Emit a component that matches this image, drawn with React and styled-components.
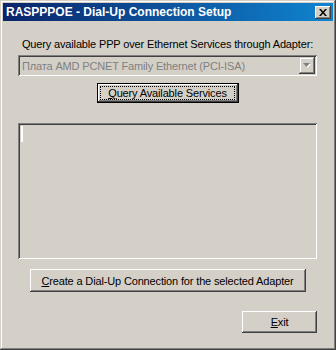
import React from 'react';
import styled, { createGlobalStyle } from 'styled-components';

const GlobalStyle = createGlobalStyle`
  html, body {
    margin: 0;
    padding: 0;
    background: #d4d0c8;
  }
  body {
    font-family: "Liberation Sans", Arial, sans-serif;
    font-size: 11px;
    letter-spacing: -0.15px;
    color: #000;
  }
`;

const Window = styled.div`
  width: 336px;
  height: 350px;
  box-sizing: border-box;
  padding: 3px;

  display: flex;
  flex-direction: column;

  background: #d4d0c8;
  box-shadow: inset -1px -1px #404040, inset 1px 1px #d4d0c8,
    inset -2px -2px #808080, inset 2px 2px #ffffff;
`;

const TitleBar = styled.div`
  height: 18px;
  padding: 0 2px 0 3px;

  display: flex;
  align-items: center;
  justify-content: space-between;

  background: linear-gradient(to right, #0a246a, #1084d0);
`;

const TitleText = styled.span`
  font-size: 12px;
  font-weight: bold;
  letter-spacing: 0;
  color: #ffffff;
  white-space: nowrap;
`;

const CaptionButton = styled.div`
  width: 16px;
  height: 13px;
  box-sizing: border-box;

  display: flex;
  align-items: center;
  justify-content: center;

  background: #d4d0c8;
  box-shadow: inset -1px -1px #404040, inset 1px 1px #ffffff,
    inset -2px -2px #808080;
`;

const Client = styled.div`
  flex: 1;
  padding: 0 16px 0 15px;

  display: flex;
  flex-direction: column;
`;

const Label = styled.div`
  margin-top: 17px;
  line-height: 13px;
  text-align: center;
  white-space: nowrap;
`;

const Sunken = styled.div`
  box-sizing: border-box;
  padding: 2px;
  background: #d4d0c8;
  box-shadow: inset 1px 1px #808080, inset -1px -1px #ffffff,
    inset 2px 2px #404040, inset -2px -2px #d4d0c8;
`;

const Combo = styled(Sunken)`
  height: 21px;
  margin-top: 4px;

  display: flex;
  align-items: stretch;
`;

const ComboText = styled.div`
  flex: 1;
  padding-left: 2px;

  display: flex;
  align-items: center;

  color: #808080;
  white-space: nowrap;
  overflow: hidden;
`;

const DropButton = styled.div`
  width: 16px;

  display: flex;
  align-items: center;
  justify-content: center;

  box-shadow: inset -1px -1px #404040, inset 1px 1px #d4d0c8,
    inset -2px -2px #808080, inset 2px 2px #ffffff;
`;

const Button = styled.button`
  position: relative;
  box-sizing: border-box;
  width: ${(p) => p.$width}px;
  height: ${(p) => p.$height}px;
  margin-top: ${(p) => p.$top}px;
  padding: 0;
  align-self: ${(p) => p.$align || 'center'};

  font-family: inherit;
  font-size: 11px;
  letter-spacing: inherit;
  color: #000;
  background: #d4d0c8;
  border: none;
  box-shadow: ${(p) =>
    p.$default
      ? 'inset 0 0 0 1px #000, inset -2px -2px #404040, inset 2px 2px #fff, inset -3px -3px #808080'
      : 'inset -1px -1px #404040, inset 1px 1px #fff, inset -2px -2px #808080'};
`;

const FocusRing = styled.span`
  position: absolute;
  inset: 3px 4px 3px 3px;
  outline: 1px dotted #000;
  outline-offset: -1px;
`;

const ListBox = styled(Sunken)`
  height: 136px;
  margin-top: 20px;
`;

const Caret = styled.div`
  width: 2px;
  height: 16px;
  margin: 1px 0 0 1px;
  background: #ffffff;
`;

const CloseIcon = () => (
  <svg width="8" height="7" viewBox="0 0 8 7">
    <path d="M0 0h2l2 2.5L6 0h2L5 3.5 8 7H6L4 4.5 2 7H0l3-3.5z" fill="#000" />
  </svg>
);

const ArrowIcon = () => (
  <svg width="8" height="5" viewBox="0 0 8 5">
    <polygon points="1,1 8,1 4.5,5" fill="#ffffff" />
    <polygon points="0,0 7,0 3.5,4" fill="#808080" />
  </svg>
);

const App = () => {
  return (
    <>
      <GlobalStyle />
      <Window>
        <TitleBar>
          <TitleText>RASPPPOE - Dial-Up Connection Setup</TitleText>
          <CaptionButton>
            <CloseIcon />
          </CaptionButton>
        </TitleBar>

        <Client>
          <Label>Query available PPP over Ethernet Services through Adapter:</Label>

          <Combo>
            <ComboText>Плата AMD PCNET Family Ethernet (PCI-ISA)</ComboText>
            <DropButton>
              <ArrowIcon />
            </DropButton>
          </Combo>

          <Button $default $width={142} $height={20} $top={7}>
            <FocusRing />
            <u>Q</u>uery Available Services
          </Button>

          <ListBox>
            <Caret />
          </ListBox>

          <Button $width={276} $height={23} $top={10}>
            <u>C</u>reate a Dial-Up Connection for the selected Adapter
          </Button>

          <Button $width={75} $height={22} $top={19} $align="flex-end">
            <u>E</u>xit
          </Button>
        </Client>
      </Window>
    </>
  );
};

export default App;
